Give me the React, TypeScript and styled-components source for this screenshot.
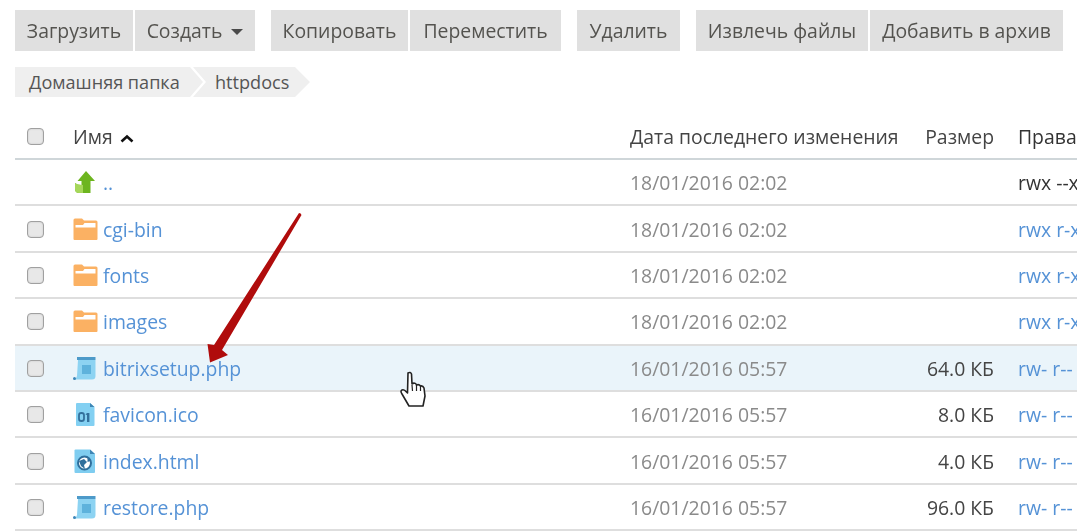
import React from 'react';
import styled, { createGlobalStyle } from 'styled-components';

const GlobalStyle = createGlobalStyle`
  html, body {
    margin: 0;
    padding: 0;
    background: #fff;
    overflow: hidden;
  }
  body {
    font-family: "Open Sans", "Noto Sans", sans-serif;
    font-size: 19.4px;
    color: #3d3d3d;
  }
`;

const Page = styled.div`
  position: relative;
  width: 1077px;
  height: 531px;
  overflow: hidden;
  padding: 10px 0 0 15px;
  box-sizing: border-box;
  filter: blur(0.5px);
`;

const Toolbar = styled.div`
  display: flex;
  height: 41px;
`;

const ButtonGroup = styled.div`
  display: flex;
  gap: 2px;
  margin-right: 16px;
`;

const ToolButton = styled.button<{ $w: number }>`
  width: ${(p) => p.$w}px;
  height: 41px;
  padding: 0;
  border: 0;
  background: #e0e0e0;
  color: #54534f;
  font: inherit;
  display: flex;
  align-items: center;
  justify-content: center;
  gap: 9px;
`;

const Caret = styled.span`
  width: 0;
  height: 0;
  border-left: 6px solid transparent;
  border-right: 6px solid transparent;
  border-top: 6px solid #4a4a4a;
  margin-top: 2px;
`;

const Crumbs = styled.div`
  display: flex;
  height: 30px;
  margin-top: 16px;
  color: #555;
  font-size: 18.1px;
`;

const Crumb = styled.div<{ $w: number; $first?: boolean }>`
  width: ${(p) => p.$w}px;
  height: 30px;
  background: #efefef;
  display: flex;
  align-items: center;
  box-sizing: border-box;
  padding-left: ${(p) => (p.$first ? 14 : 22)}px;
  margin-left: ${(p) => (p.$first ? 0 : -10)}px;
  clip-path: ${(p) =>
    p.$first
      ? 'polygon(0 0, calc(100% - 13px) 0, 100% 50%, calc(100% - 13px) 100%, 0 100%)'
      : 'polygon(0 0, calc(100% - 15px) 0, 100% 50%, calc(100% - 15px) 100%, 0 100%, 13px 50%)'};
`;

const Table = styled.div`
  margin-top: 18px;
  width: 1200px;
`;

const rowColumns = '58px 557px 294px 70px 24px 1fr';

const HeadRow = styled.div`
  display: grid;
  grid-template-columns: ${rowColumns};
  align-items: center;
  height: 43px;
  border-bottom: 2px solid #cfd6d9;
  color: #444;
`;

const Row = styled.div<{ $hover?: boolean }>`
  display: grid;
  grid-template-columns: ${rowColumns};
  align-items: center;
  height: 43.4px;
  padding-top: 1px;
  border-bottom: 2px solid #dedede;
  background: ${(p) => (p.$hover ? '#eaf4fa' : '#fff')};
`;

const Check = styled.span`
  display: block;
  width: 15px;
  height: 15px;
  margin-left: 12px;
  border: 1.5px solid #a0a0a0;
  border-radius: 4px;
  background: #e8e8e8;
  box-shadow: inset 0 0 2px rgba(0, 0, 0, 0.15);
`;

const NameCell = styled.div`
  display: flex;
  align-items: center;
  gap: 5px;
`;

const IconBox = styled.span`
  display: block;
  width: 25px;
  height: 25px;
  flex: none;
  svg {
    display: block;
  }
`;

const NameLink = styled.a`
  color: #5592d6;
`;

const DateCell = styled.div`
  color: #8a8a8a;
`;

const SizeCell = styled.div`
  text-align: right;
  color: #444;
  white-space: nowrap;
`;

const PermCell = styled.div<{ $link?: boolean }>`
  grid-column: 6;
  white-space: nowrap;
  color: ${(p) => (p.$link ? '#5592d6' : '#333')};
`;

const HeadLabel = styled.div<{ $right?: boolean }>`
  white-space: nowrap;
  text-align: ${(p) => (p.$right ? 'right' : 'left')};
`;

const SortMark = styled.svg`
  margin-left: 7px;
  vertical-align: 1px;
`;

const Overlay = styled.svg`
  position: absolute;
  pointer-events: none;
`;

const ArrowOverlay = styled(Overlay)`
  left: 195px;
  top: 205px;
`;

const HandOverlay = styled(Overlay)`
  left: 398px;
  top: 370px;
`;

type IconKind = 'up' | 'folder' | 'script' | 'binary' | 'web';

const FileIcon = ({ kind }: { kind: IconKind }) => {
  if (kind === 'up') {
    return (
      <svg width="25" height="25" viewBox="0 0 25 25">
        <path d="M13 1 L22 11 L17.5 11 L17.5 23 L6 23 Q2 23 2 19 L2 13 Q4 15 8.5 15 L8.5 11 L4.5 11 Z" fill="#6db51f" />
        <path d="M2 13 Q4 15 8.5 15 L10 15 L10 23 L6 23 Q2 23 2 19 Z" fill="#a6d75a" />
      </svg>
    );
  }
  if (kind === 'folder') {
    return (
      <svg width="25" height="25" viewBox="0 0 25 25">
        <path d="M0.5 3 Q0.5 1.5 2 1.5 L9 1.5 L11 3.5 L23 3.5 Q24.5 3.5 24.5 5 L24.5 22 Q24.5 23 23.5 23 L1.5 23 Q0.5 23 0.5 22 Z" fill="#fbb163" />
        <path d="M2.5 8 L10 8 L11.5 6 L22.5 6 L22.5 10.5 L2.5 10.5 Z" fill="#fff" />
      </svg>
    );
  }
  if (kind === 'script') {
    return (
      <svg width="25" height="25" viewBox="0 0 25 25">
        <path d="M5 4 L22.5 4 L22.5 20 Q22.5 23.5 19 23.5 L1 23.5 Q3.5 23 4 20 Z" fill="#8dd3f2" />
        <rect x="4" y="1" width="18.5" height="3" fill="#4d9ac9" />
        <rect x="9" y="9" width="9" height="9" fill="#5eb2dc" />
        <circle cx="1.5" cy="22.5" r="1.5" fill="#3c86b8" />
      </svg>
    );
  }
  if (kind === 'binary') {
    return (
      <svg width="25" height="25" viewBox="0 0 25 25">
        <path d="M4 1 L17 1 L21.5 5 L21.5 23 Q21.5 24 20.5 24 L4 24 Q3 24 3 23 L3 2 Q3 1 4 1 Z" fill="#83d0f2" />
        <path d="M17 1 L21.5 5 L17 5 Z" fill="#3f86b4" />
        <rect x="6" y="11" width="5" height="8" rx="2.3" fill="none" stroke="#33709c" strokeWidth="1.8" />
        <rect x="14" y="11" width="2.4" height="9" fill="#33709c" />
        <path d="M12.5 12.5 L14 11 L14 13 Z" fill="#33709c" />
      </svg>
    );
  }
  return (
    <svg width="25" height="25" viewBox="0 0 25 25">
      <path d="M2.5 0.5 L17 0.5 L22 5 L22 23 Q22 24 21 24 L2.5 24 Q1.5 24 1.5 23 L1.5 1.5 Q1.5 0.5 2.5 0.5 Z" fill="#7fcdf0" />
      <path d="M17 0.5 L22 5 L17 5 Z" fill="#3f86b4" />
      <circle cx="11.5" cy="14" r="6.5" fill="#fff" stroke="#2f6f9c" strokeWidth="2" />
      <path d="M6 12 L11 10 L14 13 L11 16 L12 20 L8 17 Z M14.5 8.5 L17.5 12 L14.5 13 Z" fill="#2f6f9c" />
    </svg>
  );
};

const rows: {
  icon: IconKind;
  name: string;
  date: string;
  size?: string;
  perm: string;
  check?: boolean;
  permLink?: boolean;
  hover?: boolean;
}[] = [
  { icon: 'up', name: '..', date: '18/01/2016 02:02', perm: 'rwx --x --x', check: false },
  { icon: 'folder', name: 'cgi-bin', date: '18/01/2016 02:02', perm: 'rwx r-x r-x', permLink: true },
  { icon: 'folder', name: 'fonts', date: '18/01/2016 02:02', perm: 'rwx r-x r-x', permLink: true },
  { icon: 'folder', name: 'images', date: '18/01/2016 02:02', perm: 'rwx r-x r-x', permLink: true },
  { icon: 'script', name: 'bitrixsetup.php', date: '16/01/2016 05:57', size: '64.0 КБ', perm: 'rw- r-- r--', permLink: true, hover: true },
  { icon: 'binary', name: 'favicon.ico', date: '16/01/2016 05:57', size: '8.0 КБ', perm: 'rw- r-- r--', permLink: true },
  { icon: 'web', name: 'index.html', date: '16/01/2016 05:57', size: '4.0 КБ', perm: 'rw- r-- r--', permLink: true },
  { icon: 'script', name: 'restore.php', date: '16/01/2016 05:57', size: '96.0 КБ', perm: 'rw- r-- r--', permLink: true },
];

export default function App() {
  return (
    <Page>
      <GlobalStyle />
      <Toolbar>
        <ButtonGroup>
          <ToolButton $w={118}>Загрузить</ToolButton>
          <ToolButton $w={120}>
            Создать <Caret />
          </ToolButton>
        </ButtonGroup>
        <ButtonGroup>
          <ToolButton $w={137}>Копировать</ToolButton>
          <ToolButton $w={151}>Переместить</ToolButton>
        </ButtonGroup>
        <ButtonGroup>
          <ToolButton $w={103}>Удалить</ToolButton>
        </ButtonGroup>
        <ButtonGroup>
          <ToolButton $w={172}>Извлечь файлы</ToolButton>
          <ToolButton $w={193}>Добавить в архив</ToolButton>
        </ButtonGroup>
      </Toolbar>

      <Crumbs>
        <Crumb $first $w={188}>Домашняя папка</Crumb>
        <Crumb $w={117}>httpdocs</Crumb>
      </Crumbs>

      <Table>
        <HeadRow>
          <Check />
          <HeadLabel>
            Имя
            <SortMark width="14" height="9" viewBox="0 0 14 9">
              <path d="M1.5 7.5 L7 2.5 L12.5 7.5" fill="none" stroke="#111" strokeWidth="2.6" />
            </SortMark>
          </HeadLabel>
          <HeadLabel>Дата последнего изменения</HeadLabel>
          <HeadLabel $right>Размер</HeadLabel>
          <PermCell>Права</PermCell>
        </HeadRow>
        {rows.map((row) => (
          <Row key={row.name} $hover={row.hover}>
            {row.check === false ? <span /> : <Check />}
            <NameCell>
              <IconBox>
                <FileIcon kind={row.icon} />
              </IconBox>
              <NameLink>{row.name}</NameLink>
            </NameCell>
            <DateCell>{row.date}</DateCell>
            <SizeCell>{row.size}</SizeCell>
            <PermCell $link={row.permLink}>{row.perm}</PermCell>
          </Row>
        ))}
      </Table>

      <ArrowOverlay width="115" height="165" viewBox="0 0 115 165">
        <path
          d="M104 8 Q106 8 106.5 10 L27 145 L33 150 L15 157.5 L12.5 139 L19 140 Z"
          fill="#b00c0c"
        />
      </ArrowOverlay>

      <HandOverlay width="32" height="38" viewBox="0 0 32 38">
        <path
          d="M10 3 Q12.5 1.5 13.5 4 L14 14 L16 13 Q18 13 18.5 15 Q21 14 22.5 16 Q25 15.5 26 18 L27 26 L25 36 L11 36 L4 24 Q2 21 4 20 Q6 19 8.5 22 L9.5 23 Z"
          fill="#fff"
          stroke="#222"
          strokeWidth="1.6"
          strokeLinejoin="round"
        />
        <path d="M14 15 L14.5 21 M18.5 15 L18.5 21 M22.5 16 L22.5 21" stroke="#222" strokeWidth="1.2" fill="none" />
      </HandOverlay>
    </Page>
  );
}
